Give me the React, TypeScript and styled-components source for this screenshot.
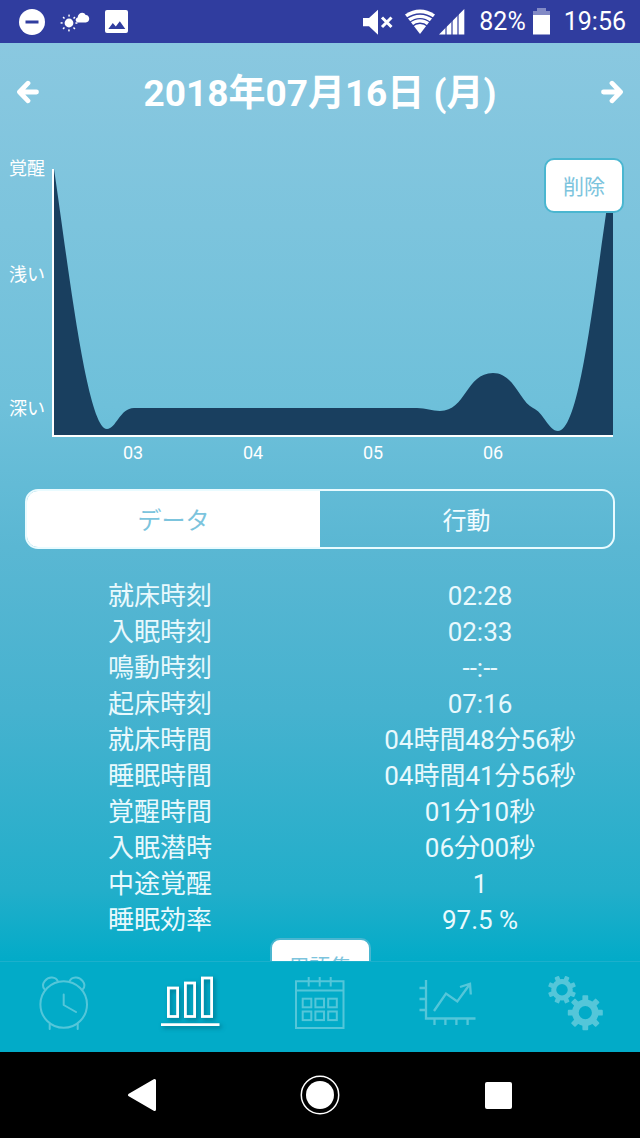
import React, { useState } from 'react';
import styled, { createGlobalStyle } from 'styled-components';

const GlobalStyle = createGlobalStyle`
  *, *::before, *::after { box-sizing: border-box; }
  body {
    margin: 0;
    background: #000;
    color: #fff;
    font-family: Roboto, "Noto Sans CJK JP", sans-serif;
  }
  button {
    margin: 0;
    padding: 0;
    border: 0;
    background: none;
    color: inherit;
    font: inherit;
    cursor: pointer;
  }
  svg { display: block; }
`;

const Screen = styled.div`
  display: flex;
  flex-direction: column;
  height: 100vh;
`;

const StatusBar = styled.div`
  flex: none;
  display: flex;
  align-items: center;
  justify-content: space-between;
  height: 43px;
  padding: 0 14px 0 19px;
  background: #303d9f;
  font-size: 25px;
  line-height: 30px;
`;

const StatusGroup = styled.div<{ $gap: number }>`
  display: flex;
  align-items: center;
  gap: ${(p) => p.$gap}px;
`;

const AppBody = styled.div`
  flex: 1;
  min-height: 0;
  display: flex;
  flex-direction: column;
  background: linear-gradient(#8ac8e0 0%, #6ec0da 36%, #5ab7d3 50%, #46b2cf 66%, #22aeca 84%, #02abc8 91%, #02abc8 100%);
`;

const Content = styled.main`
  flex: 1;
  min-height: 0;
  overflow-y: auto;
  scrollbar-width: none;
`;

const DateHeader = styled.header`
  display: flex;
  align-items: center;
  justify-content: space-between;
  height: 102px;
  padding: 0 16px;
`;

const DateTitle = styled.h1`
  margin: 0;
  font-size: 37px;
  line-height: 48px;
  font-weight: 700;
`;

const Chart = styled.section`
  position: relative;
  display: flex;
  margin-top: 13px;
  padding-right: 27px;
  font-size: 18px;
  line-height: 20px;
`;

const DepthLabels = styled.div`
  flex: none;
  display: grid;
  grid-template-rows: 106px 134px 20px;
  width: 52px;
  padding: 1px 0 0 9px;
`;

const PlotColumn = styled.div`
  flex: 1;
  min-width: 0;
  padding-top: 11px;
`;

const Plot = styled.div`
  height: 268px;
  border-left: 2px solid #fff;
  border-bottom: 2px solid #fff;

  svg {
    width: 100%;
    height: 100%;
  }
`;

const HourLabels = styled.div`
  display: grid;
  grid-template-columns: 21fr repeat(4, 120fr) 60fr;
  margin-top: 6px;
  text-align: center;

  span:first-child { grid-column-start: 2; }
`;

const PillButton = styled.button`
  height: 55px;
  padding: 2px 17px 0;
  border: 2px solid #4ab6d0;
  border-radius: 10px;
  background: #fff;
  color: #7cc4dd;
  font-size: 21px;
  line-height: 30px;
`;

const DeleteButton = styled(PillButton)`
  position: absolute;
  top: 0;
  right: 16px;
`;

const Segments = styled.div`
  display: flex;
  height: 60px;
  margin: 26px 25px 0;
  border: 2px solid #e9fbff;
  border-radius: 13px;
  overflow: hidden;
`;

const Segment = styled.button<{ $active: boolean }>`
  flex: 1;
  padding-bottom: 2px;
  background: ${(p) => (p.$active ? '#fff' : 'transparent')};
  color: ${(p) => (p.$active ? '#7cc4dd' : '#f2fcff')};
  font-size: 24px;
`;

const DataTable = styled.table`
  width: 100%;
  margin-top: 29px;
  border-collapse: collapse;
  table-layout: fixed;
  color: #e9f9fd;
  font-size: 26px;
  line-height: 36px;

  th, td {
    height: 36px;
    padding: 0;
    font-weight: 400;
    text-align: center;
  }
`;

const Footer = styled.div`
  display: flex;
  justify-content: center;
  padding-bottom: 24px;
`;

const TabBar = styled.nav`
  flex: none;
  display: flex;
  height: 91px;
  border-top: 1px solid #1cb0cc;
  background: #02abc8;
`;

const Tab = styled.button<{ $active: boolean }>`
  flex: 1;
  display: flex;
  align-items: center;
  justify-content: center;

  svg {
    opacity: ${(p) => (p.$active ? 1 : 0.32)};
    filter: ${(p) => (p.$active ? 'drop-shadow(2px 2px 2px rgba(0, 60, 80, 0.5))' : 'none')};
  }
`;

const SystemNav = styled.nav`
  flex: none;
  display: flex;
  height: 86px;
  padding: 0 53px;
  background: #000;
`;

const SystemButton = styled.button`
  flex: 1;
  display: flex;
  align-items: center;
  justify-content: center;
`;

const DoNotDisturbIcon = () => (
  <svg width="26" height="26" viewBox="0 0 26 26">
    <circle cx="13" cy="13" r="13" fill="#fff" />
    <rect x="6.5" y="11.5" width="13" height="3" fill="#303d9f" />
  </svg>
);

const WeatherIcon = () => (
  <svg width="30" height="26" viewBox="0 0 30 26" fill="#fff">
    <circle cx="9" cy="14" r="4.4" />
    {[0, 45, 90, 135, 180, 225, 270, 315].map((a) => (
      <rect key={a} x="15.4" y="13.3" width="2" height="1.5" transform={`rotate(${a} 9 14)`} />
    ))}
    <path d="M18 13.4c-2.600-.3-3.400-3.800-.4-4.800C18 3.500 24 2.300 25.600 6.100c4.600-.2 5 7.300.2 7.300z" />
  </svg>
);

const PictureIcon = () => (
  <svg width="23" height="23" viewBox="0 0 23 23">
    <rect width="23" height="23" rx="2" fill="#fff" />
    <path d="M3.300 19l4.500-6 3 3.500 4-5.300L20.300 19z" fill="#303d9f" />
  </svg>
);

const MutedIcon = () => (
  <svg width="31" height="26" viewBox="0 0 31 26">
    <path d="M1 9h6l9-8.300v25L7 17.300H1z" fill="#fff" />
    <path d="M20 8.500l9.500 9.500M29.500 8.500L20 18" stroke="#fff" strokeWidth="3" />
  </svg>
);

const WifiIcon = () => (
  <svg width="30" height="26" viewBox="0 0 30 26">
    <path d="M0 5.500Q15-4.500 30 5.500L15 25z" fill="#fff" />
    <g fill="none" stroke="#303d9f" strokeWidth="1.300">
      <path d="M1 9.800Q15 .2 29 9.800" />
      <path d="M4 13.700Q15 5.500 26 13.700" />
      <path d="M7 17.500Q15 11 23 17.500" />
    </g>
  </svg>
);

const SignalIcon = () => (
  <svg width="26" height="26" viewBox="0 0 26 26">
    <path d="M0 25.500L25.300 0v25.500z" fill="#fff" />
    <path d="M7 12v14M13 6v20M19 2v24" stroke="#303d9f" strokeWidth="1.200" />
  </svg>
);

const BatteryIcon = () => (
  <svg width="17" height="27" viewBox="0 0 17 27" fill="#fff">
    <path d="M4 0h9v3h4v4H0V3h4z" opacity=".4" />
    <path d="M0 7h17v19.500H0z" />
  </svg>
);

const ArrowIcon = ({ flip }: { flip?: boolean }) => (
  <svg width="24" height="28" viewBox="0 0 24 28" fill="none" stroke="#fff" strokeWidth="4.800" strokeLinecap="round" strokeLinejoin="round">
    <path d={flip ? 'M3.500 12H20M12 3.200L20.500 12 12 20.800' : 'M20.500 12H4M12 3.200L3.500 12 12 20.800'} />
  </svg>
);

const AlarmIcon = () => (
  <svg width="64" height="64" viewBox="0 0 64 64" fill="none" stroke="#fff" strokeWidth="2" strokeLinecap="round" strokeLinejoin="round">
    <circle cx="31.700" cy="29.500" r="23.300" />
    <path d="M12.500 14.200C8 9 15 2 20 2.500c3 .3 4.800 1.300 5.600 3.300" />
    <path d="M50.900 14.200C55.400 9 48.400 2 43.400 2.500c-3 .3-4.800 1.300-5.600 3.300" />
    <path d="M31.700 19.500V30L44 37M17.700 49v5M45.700 49v5" />
  </svg>
);

const BarsIcon = () => (
  <svg width="64" height="64" viewBox="0 0 64 64" fill="none" stroke="#fff" strokeWidth="2.800">
    <rect x="8.400" y="13" width="9.200" height="28.500" />
    <rect x="25.400" y="8" width="9.200" height="33.500" />
    <rect x="42.400" y="3" width="9.200" height="38.500" />
    <path d="M1 49.700h58.500" />
  </svg>
);

const CalendarIcon = () => (
  <svg width="64" height="64" viewBox="0 0 64 64" fill="none" stroke="#fff" strokeWidth="2">
    <path d="M8 6.300h47.500V53H8zM8 15.500h47.500M20.700 2v9.500M31.700 2v9.500M42.700 2v9.500" />
    {[23.7, 36.5].map((y) =>
      [14.7, 27.4, 40.2].map((x) => <rect key={`${x}-${y}`} x={x} y={y} width="8.600" height="8.600" />),
    )}
  </svg>
);

const TrendIcon = () => (
  <svg width="64" height="64" viewBox="0 0 64 64" fill="none" stroke="#fff" strokeWidth="2.300">
    <path d="M10 5v38.500h49.500M3.500 13H10M3.500 24H10M3.500 35H10M18.500 43.500V50M29.400 43.500V50M40.400 43.500V50M51.600 43.500V50" />
    <path d="M18 36l12-17.500 11.300 8L54 9M44 12l10-3.300.8 10.800" />
  </svg>
);

const TEETH = [0, 45, 90, 135, 180, 225, 270, 315];

const GearsIcon = () => (
  <svg width="64" height="64" viewBox="0 0 64 64" fill="none" stroke="#fff">
    <g transform="translate(18 14.700) rotate(22.500)">
      <circle r="8.200" strokeWidth="5" />
      {TEETH.map((a) => <rect key={a} x="-1.600" y="-13.300" width="3.200" height="4" strokeWidth="1.600" strokeLinejoin="round" fill="#fff" transform={`rotate(${a})`} />)}
    </g>
    <g transform="translate(41.300 37.700)">
      <circle r="9.900" strokeWidth="6.600" />
      {TEETH.map((a) => <rect key={a} x="-2" y="-16.600" width="4" height="5" strokeWidth="1.800" strokeLinejoin="round" fill="#fff" transform={`rotate(${a})`} />)}
    </g>
  </svg>
);

const TABS = [
  { name: 'アラーム', Icon: AlarmIcon },
  { name: 'グラフ', Icon: BarsIcon },
  { name: 'カレンダー', Icon: CalendarIcon },
  { name: '傾向', Icon: TrendIcon },
  { name: '設定', Icon: GearsIcon },
];

const ROWS = [
  ['就床時刻', '02:28'],
  ['入眠時刻', '02:33'],
  ['鳴動時刻', '--:--'],
  ['起床時刻', '07:16'],
  ['就床時間', '04時間48分56秒'],
  ['睡眠時間', '04時間41分56秒'],
  ['覚醒時間', '01分10秒'],
  ['入眠潜時', '06分00秒'],
  ['中途覚醒', '1'],
  ['睡眠効率', '97.5 %'],
];

const SLEEP_CURVE =
  'M0 0C14 95 33 260 53 260C62 260 66 239 80 239L363 239C372 239 378 242 386 242C412 242 412 204 439 204C460 204 466 233 479 239C489 243 495 262 504 262C528 262 542 100 559 0V266H0Z';

export default function App() {
  const [segment, setSegment] = useState('データ');
  const [tab, setTab] = useState('グラフ');

  return (
    <Screen lang="ja">
      <GlobalStyle />
      <StatusBar>
        <StatusGroup $gap={15}>
          <DoNotDisturbIcon />
          <WeatherIcon />
          <PictureIcon />
        </StatusGroup>
        <StatusGroup $gap={14}>
          <StatusGroup $gap={12}>
            <MutedIcon />
            <StatusGroup $gap={4}>
              <WifiIcon />
              <SignalIcon />
            </StatusGroup>
          </StatusGroup>
          <StatusGroup $gap={7}>
            <span>82%</span>
            <BatteryIcon />
          </StatusGroup>
          <time>19:56</time>
        </StatusGroup>
      </StatusBar>

      <AppBody>
        <Content>
          <DateHeader>
            <button type="button" aria-label="前の日"><ArrowIcon /></button>
            <DateTitle>2018年07月16日 (月)</DateTitle>
            <button type="button" aria-label="次の日"><ArrowIcon flip /></button>
          </DateHeader>

          <Chart>
            <DepthLabels>
              <span>覚醒</span>
              <span>浅い</span>
              <span>深い</span>
            </DepthLabels>
            <PlotColumn>
              <Plot>
                <svg viewBox="0 0 559 266" preserveAspectRatio="none" aria-hidden="true">
                  <path d={SLEEP_CURVE} fill="#193f5f" />
                </svg>
              </Plot>
              <HourLabels>
                {['03', '04', '05', '06'].map((h) => <span key={h}>{h}</span>)}
              </HourLabels>
            </PlotColumn>
            <DeleteButton type="button">削除</DeleteButton>
          </Chart>

          <Segments>
            {['データ', '行動'].map((name) => (
              <Segment key={name} type="button" $active={name === segment} aria-pressed={name === segment} onClick={() => setSegment(name)}>
                {name}
              </Segment>
            ))}
          </Segments>

          <DataTable>
            <tbody>
              {ROWS.map(([label, value]) => (
                <tr key={label}>
                  <th scope="row">{label}</th>
                  <td>{value}</td>
                </tr>
              ))}
            </tbody>
          </DataTable>

          <Footer>
            <PillButton type="button">用語集</PillButton>
          </Footer>
        </Content>

        <TabBar>
          {TABS.map(({ name, Icon }) => (
            <Tab key={name} type="button" aria-label={name} $active={name === tab} onClick={() => setTab(name)}>
              <Icon />
            </Tab>
          ))}
        </TabBar>
      </AppBody>

      <SystemNav>
        <SystemButton type="button" aria-label="戻る">
          <svg width="30" height="36" viewBox="0 0 30 36">
            <path d="M2.500 18L27.500 3.500v29z" fill="#fff" stroke="#fff" strokeWidth="3" strokeLinejoin="round" />
          </svg>
        </SystemButton>
        <SystemButton type="button" aria-label="ホーム">
          <svg width="40" height="40" viewBox="0 0 40 40">
            <circle cx="20" cy="20" r="18.700" fill="none" stroke="#fff" strokeWidth="1.500" />
            <circle cx="20" cy="20" r="14" fill="#fff" />
          </svg>
        </SystemButton>
        <SystemButton type="button" aria-label="履歴">
          <svg width="27" height="27" viewBox="0 0 27 27">
            <rect width="27" height="27" rx="2" fill="#fff" />
          </svg>
        </SystemButton>
      </SystemNav>
    </Screen>
  );
}
